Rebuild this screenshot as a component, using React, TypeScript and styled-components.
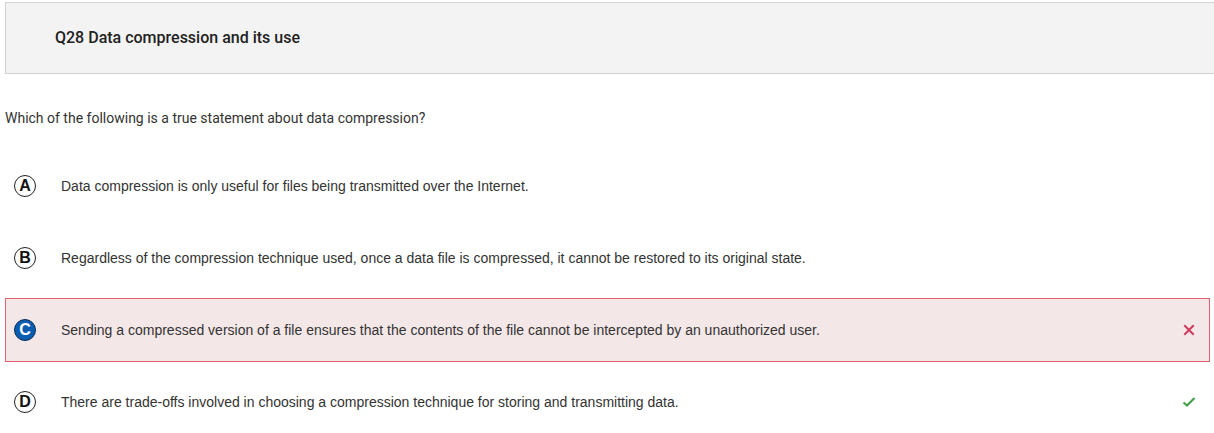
import React from "react";
import styled, { createGlobalStyle } from "styled-components";

const Global = createGlobalStyle`
  html, body { margin: 0; padding: 0; background: #fff; overflow: hidden; }
  body { font-family: Roboto, "Liberation Sans", sans-serif; color: #333; }
`;

const Page = styled.div`
  padding: 2px 4px 0 5px;
  display: flex;
  flex-direction: column;
`;

const Header = styled.div`
  height: 70px;
  margin-right: -20px;
  background: #f3f3f3;
  border: 1px solid #d2d2d2;
  display: flex;
  align-items: center;
  padding-left: 49px;
`;

const Title = styled.h2`
  margin: 0 0 2px 0;
  font-family: Roboto, sans-serif;
  font-weight: 500;
  font-size: 16px;
  color: #222;
`;

const Question = styled.p`
  margin: 34px 0 26px 0;
  line-height: 20px;
  font-family: Roboto, sans-serif;
  font-size: 14px;
  color: #333;
`;

const Options = styled.div`
  display: flex;
  flex-direction: column;
  gap: 8px;
`;

const Row = styled.div<{ $wrong?: boolean }>`
  height: 64px;
  box-sizing: border-box;
  display: flex;
  align-items: center;
  border: 1px solid ${(p) => (p.$wrong ? "#e0606e" : "transparent")};
  background: ${(p) => (p.$wrong ? "#f3e7e8" : "transparent")};
  padding: 0 12px 0 8px;
`;

const Letter = styled.span<{ $selected?: boolean }>`
  width: 22px;
  height: 22px;
  box-sizing: border-box;
  border-radius: 50%;
  border: 1.5px solid ${(p) => (p.$selected ? "#0b2e57" : "#222")};
  background: ${(p) => (p.$selected ? "#0a5db0" : "#fff")};
  color: ${(p) => (p.$selected ? "#fff" : "#111")};
  display: flex;
  align-items: center;
  justify-content: center;
  font-family: "Liberation Sans", Arial, sans-serif;
  font-weight: 700;
  font-size: 16px;
  flex-shrink: 0;
`;

const Text = styled.span`
  margin-left: 25px;
  flex: 1;
  font-family: "Liberation Sans", Arial, sans-serif;
  font-size: 14px;
  color: #333;
`;

const Mark = styled.span`
  width: 16px;
  height: 16px;
  display: flex;
  align-items: center;
  justify-content: center;
`;

const Cross = () => (
  <svg width="12" height="12" viewBox="0 0 12 12">
    <path d="M2 2 L10 10 M10 2 L2 10" stroke="#d03a5c" strokeWidth="2" strokeLinecap="square" />
  </svg>
);

const Check = () => (
  <svg width="14" height="12" viewBox="0 0 14 12">
    <path d="M1.5 6.5 L5 9.5 L12.5 2" stroke="#47a04a" strokeWidth="2.2" fill="none" />
  </svg>
);

const options = [
  { l: "A", t: "Data compression is only useful for files being transmitted over the Internet." },
  { l: "B", t: "Regardless of the compression technique used, once a data file is compressed, it cannot be restored to its original state." },
  { l: "C", t: "Sending a compressed version of a file ensures that the contents of the file cannot be intercepted by an unauthorized user.", wrong: true },
  { l: "D", t: "There are trade-offs involved in choosing a compression technique for storing and transmitting data.", correct: true },
];

export default function App() {
  return (
    <>
      <Global />
      <Page>
        <Header>
          <Title>Q28 Data compression and its use</Title>
        </Header>
        <Question>Which of the following is a true statement about data compression?</Question>
        <Options>
          {options.map((o) => (
            <Row key={o.l} $wrong={o.wrong}>
              <Letter $selected={o.wrong}>{o.l}</Letter>
              <Text>{o.t}</Text>
              <Mark>{o.wrong ? <Cross /> : o.correct ? <Check /> : null}</Mark>
            </Row>
          ))}
        </Options>
      </Page>
    </>
  );
}
